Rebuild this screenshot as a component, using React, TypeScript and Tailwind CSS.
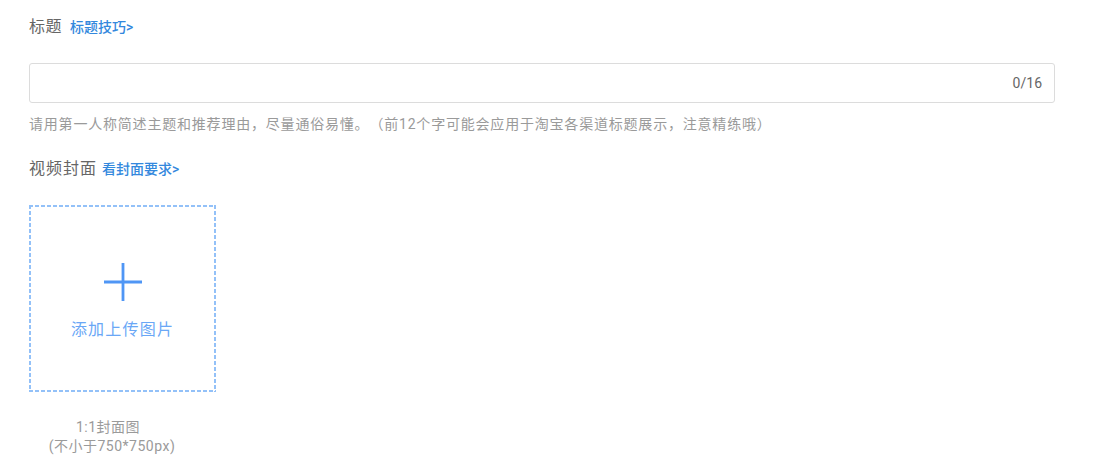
import { useState } from 'react';

const FONT = "font-['Roboto','Noto_Sans_CJK_SC',sans-serif]";

const PlusIcon = () => (
  <svg width="40" height="40" viewBox="0 0 40 40" className="block">
    <path d="M20 1v38M1 20h38" stroke="#4f96f5" strokeWidth="2.8" fill="none" />
  </svg>
);

export default function App() {
  const [title, setTitle] = useState('');

  return (
    <div className={`${FONT} bg-white w-[1109px] h-[470px] pl-[29px] pr-[54px] pt-[17px]`}>
      <div className="flex items-baseline gap-[8px] leading-[20px]">
        <span className="text-[16px] tracking-[0.5px] text-[#666]">标题</span>
        <a className="text-[14px] font-medium text-[#3388dd] cursor-pointer">标题技巧&gt;</a>
      </div>

      <div className="mt-[26px] h-[40px] border border-[#dcdcdc] rounded-[3px] flex items-center pl-3 pr-[12px]">
        <input
          value={title}
          maxLength={16}
          onChange={(e) => setTitle(e.target.value)}
          className="flex-1 h-full outline-none text-[14px] text-[#333] bg-transparent"
        />
        <span className="text-[14px] text-[#666]">{title.length}/16</span>
      </div>

      <p className="mt-[11px] text-[14px] leading-[20px] text-[#9a9a9a] tracking-[0.8px] [text-spacing-trim:space-all]">
        请用第一人称简述主题和推荐理由，尽量通俗易懂。（前12个字可能会应用于淘宝各渠道标题展示，注意精练哦）
      </p>

      <div className="mt-[25px] flex items-baseline gap-[5px] leading-[20px]">
        <span className="text-[16px] tracking-[1px] text-[#666]">视频封面</span>
        <a className="text-[14px] font-medium text-[#3388dd] cursor-pointer">看封面要求&gt;</a>
      </div>

      <div className="mt-[26px] w-[187px] h-[187px] bg-no-repeat bg-[repeating-linear-gradient(90deg,#93c1f8_0_4px,transparent_4px_6px),repeating-linear-gradient(90deg,#93c1f8_0_4px,transparent_4px_6px),repeating-linear-gradient(180deg,#93c1f8_0_4px,transparent_4px_6px),repeating-linear-gradient(180deg,#93c1f8_0_4px,transparent_4px_6px)] bg-[length:100%_2px,100%_2px,2px_100%,2px_100%] bg-[position:0_0,0_100%,0_0,100%_0] flex flex-col items-center justify-center gap-[18px] pt-[4px] cursor-pointer">
        <PlusIcon />
        <span className="text-[16px] tracking-[1.2px] leading-[20px] text-[#6aa7f6]">添加上传图片</span>
      </div>

      <div className="mt-[26px] w-[166px] text-center text-[14px] leading-[19px] tracking-[0.5px] text-[#9a9a9a]">
        <div className="pr-[8px]">1:1封面图</div>
        <div>(不小于750*750px)</div>
      </div>
    </div>
  );
}
